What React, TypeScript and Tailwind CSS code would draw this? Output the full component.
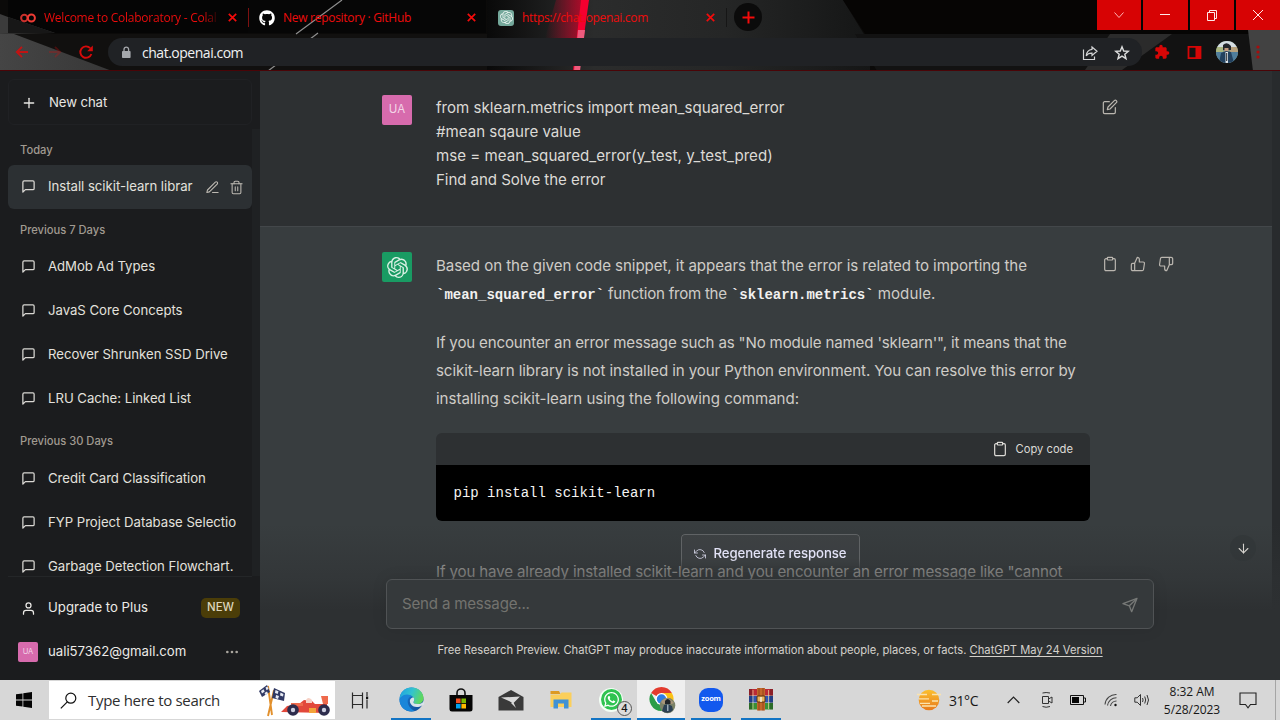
import type { ReactNode } from "react";
import {
  FiArrowDown,
  FiClipboard,
  FiEdit,
  FiEdit3,
  FiMessageSquare,
  FiMoreHorizontal,
  FiPlus,
  FiRefreshCcw,
  FiThumbsDown,
  FiThumbsUp,
  FiTrash2,
  FiUser,
} from "react-icons/fi";
import { FaGithub, FaWhatsapp } from "react-icons/fa";
import { SiOpenai } from "react-icons/si";
import { MdExtension } from "react-icons/md";

/* ---------- Browser chrome ---------- */

function ThemeArt() {
  return (
    <svg className="absolute inset-0" width="1280" height="71" viewBox="0 0 1280 71" aria-hidden="true">
      <defs>
        <linearGradient id="sheen" x1="0" x2="1">
          <stop offset="0" stopColor="#090909" />
          <stop offset="0.28" stopColor="#2b2c2c" />
          <stop offset="0.62" stopColor="#252626" />
          <stop offset="1" stopColor="#151616" />
        </linearGradient>
        <linearGradient id="glow" x1="0" x2="1">
          <stop offset="0" stopColor="#e0002a" stopOpacity="0" />
          <stop offset="1" stopColor="#e0002a" stopOpacity="0.75" />
        </linearGradient>
        <linearGradient id="wing" x1="0" x2="1">
          <stop offset="0" stopColor="#454545" />
          <stop offset="1" stopColor="#373737" />
        </linearGradient>
      </defs>
      <rect width="1280" height="71" fill="#0b0a09" />
      <rect y="34" width="560" height="37" fill="#11100f" />
      <path d="M487 0H843L870 44V71H487Z" fill="url(#sheen)" />
      <path d="M843 0H1280V71H890Z" fill="#060504" />
      <path d="M855 34H1280V71H877Z" fill="#121212" />
      <rect x="8" width="240" height="33" fill="#050505" />
      <rect x="248" width="238" height="33" fill="#060606" />
      <path d="M0 14L8 17L55 33L0 34Z" fill="#3b3b3b" />
      <path d="M8 17L55 33H8Z" fill="#171717" />
      <path d="M0 34L14 34L112 71H0Z" fill="url(#wing)" />
      <path d="M342 0L296 34M318 33L268 71" stroke="#8d8d8d" strokeWidth="1.2" fill="none" />
      <path d="M1110 34H1172L1122 70H1085Z" fill="#2b2b2b" />
      <path d="M1248 30H1280V71H1253Z" fill="#424242" />
      <path d="M556 0H584L578 38H545Z" fill="url(#glow)" />
      <path d="M581 0H589L579 71H573Z" fill="#f5002f" />
      <path d="M578 30H585L580 71H574Z" fill="#ee5b7d" />
      <rect y="70" width="1280" height="1" fill="#4a0407" />
    </svg>
  );
}

function TabClose() {
  return (
    <svg width="9" height="9" viewBox="0 0 9 9" className="shrink-0" stroke="#f40b0b" strokeWidth="1.7">
      <path d="M0.8 0.8L8.2 8.2M8.2 0.8L0.8 8.2" />
    </svg>
  );
}

function Tab({ icon, title, className }: { icon: ReactNode; title: ReactNode; className: string }) {
  return (
    <div className={`flex h-[35px] items-center pr-[11px] ${className}`}>
      <span className="flex w-4 shrink-0 justify-center">{icon}</span>
      <span className="ml-2 flex-1 overflow-hidden text-[12px] whitespace-nowrap text-[#ee0c0c]">{title}</span>
      <TabClose />
    </div>
  );
}

function WindowButton({ children }: { children: ReactNode }) {
  return (
    <div className="flex h-[30px] flex-1 items-center justify-center bg-[#d70304]">
      <svg width="12" height="12" viewBox="0 0 12 12" fill="none" stroke="#ffe9e9" strokeWidth="1">
        {children}
      </svg>
    </div>
  );
}

function Browser() {
  return (
    <header className="relative h-[71px] shrink-0 font-['Open_Sans','Noto_Sans',sans-serif]">
      <ThemeArt />
      <div className="relative flex h-9 items-start pl-2">
        <Tab
          className="w-[240px] pl-[12px]"
          icon={
            <svg width="16" height="10" viewBox="0 0 16 10" fill="none" strokeWidth="2">
              <circle cx="4.3" cy="5" r="3.2" stroke="#c9302c" />
              <circle cx="11.4" cy="5" r="3.5" stroke="#ee3b34" />
            </svg>
          }
          title={
            <span className="block w-[176px] bg-linear-to-r from-[#ee0c0c] from-90% to-transparent bg-clip-text tracking-[-0.24px] text-transparent">
              Welcome to Colaboratory - Colal
            </span>
          }
        />
        <span className="mt-2 h-[19px] w-px bg-[#7d1111]" />
        <Tab
          className="w-[238px] pl-[10px] tracking-[-0.28px]"
          icon={<FaGithub size={16} color="#fff" />}
          title="New repository · GitHub"
        />
        <Tab
          className="w-[239px] pl-[11px] tracking-[-0.34px]"
          icon={
            <span className="flex size-4 items-center justify-center rounded-[3px] bg-[#74a89b]">
              <SiOpenai size={13} color="#e6f2ee" />
            </span>
          }
          title="https://chat.openai.com"
        />
        <span className="mt-2 h-[19px] w-px bg-[#161616]" />
        <span className="mt-[3px] ml-[7px] flex size-7 items-center justify-center rounded-full bg-[#0b0b0b]">
          <svg width="13" height="13" viewBox="0 0 13 13" stroke="#f40b0b" strokeWidth="2">
            <path d="M6.5 0.5V12.5M0.5 6.5H12.5" />
          </svg>
        </span>
        <div className="ml-auto flex w-[183px] gap-[2px]">
          <WindowButton>
            <path d="M1.5 3.5L6 8.5L10.5 3.5" stroke="#ffb3b3" />
          </WindowButton>
          <WindowButton>
            <path d="M1 5.5H11" />
          </WindowButton>
          <WindowButton>
            <path d="M1.5 3.5H8.5V11.5H1.5ZM3.5 3.5V1.5H10.5V9.5H8.5" />
          </WindowButton>
          <WindowButton>
            <path d="M1 1L11 11M11 1L1 11" />
          </WindowButton>
        </div>
      </div>
      <div className="relative flex h-8 items-center pl-[14px]">
        <svg width="80" height="16" viewBox="0 0 80 16" fill="none" stroke="#d60a0a" strokeWidth="1.9">
          <path d="M14 8H3M8 2.8L2.8 8L8 13.2" opacity="0.85" />
          <path d="M35 8H46M41 2.8L46.2 8L41 13.2" opacity="0.28" />
          <path d="M77.4 10A5.7 5.7 0 1 1 76.2 4.2" />
          <path d="M78.8 1.6V7.2H73.2Z" fill="#d60a0a" stroke="none" />
        </svg>
        <div className="ml-[14px] flex h-7 w-[1034px] items-center rounded-full bg-[#202225] pr-[12px] pl-[13px]">
          <svg width="10" height="13" viewBox="0 0 10 13">
            <rect x="1" y="5" width="8.6" height="7" rx="0.8" fill="#a5a8ac" />
            <path d="M3 5V3.4A2.3 2.3 0 0 1 7.6 3.4V5" fill="none" stroke="#a5a8ac" strokeWidth="1.3" />
          </svg>
          <span className="ml-[11px] text-[14px] tracking-[-0.48px] text-[#f1f2f3]">chat.openai.com</span>
          <svg className="mt-px ml-auto" width="16" height="16" viewBox="0 0 16 16" fill="none" stroke="#d4d5d6" strokeWidth="1.2">
            <path d="M1.5 4.5V14.5H12.5V11.5" />
            <path d="M10 2L15 6.2L10 10.4V8.2C7.2 8.1 5.4 9 4.2 10.9C4.5 7.4 6.6 4.7 10 4.3Z" />
          </svg>
          <svg className="mt-px ml-4" width="16" height="16" viewBox="0 0 16 16" fill="none" stroke="#dcdddd" strokeWidth="1.4">
            <path d="M8 1.8L9.7 6L14.3 6.3L10.8 9.2L12 13.7L8 11.2L4 13.7L5.2 9.2L1.7 6.3L6.3 6Z" />
          </svg>
        </div>
        <MdExtension className="ml-[12px]" size={16} color="#d60606" />
        <svg className="ml-[17px]" width="15" height="15" viewBox="0 0 15 15">
          <path d="M1.5 1.8H13.5V13.2H1.5Z" fill="none" stroke="#d60606" strokeWidth="1.8" />
          <rect x="8.5" y="2" width="5" height="11" fill="#d60606" />
        </svg>
        <svg className="ml-[14px]" width="22" height="22" viewBox="0 0 22 22">
          <defs>
            <clipPath id="face">
              <circle cx="11" cy="11" r="11" />
            </clipPath>
          </defs>
          <g clipPath="url(#face)">
            <rect width="22" height="22" fill="#7f9a86" />
            <path d="M0 0H22V6H0Z" fill="#d5dde2" />
            <path d="M0 6H7V11H0Z" fill="#a9b57f" />
            <path d="M14 6H22V12H14Z" fill="#b6a07c" />
            <path d="M0 11H22V22H0Z" fill="#4f7d9c" />
            <path d="M7 4Q11 0 15 5V9H7Z" fill="#23262b" />
            <path d="M8.5 7H12.5V11H8.5Z" fill="#c59a80" />
            <path d="M3 22L5 12L10 10L15 11L18 22Z" fill="#23415f" />
            <path d="M9.5 11H12V22H9.5Z" fill="#dfe7ee" />
            <path d="M10.2 12H11.2V20H10.2Z" fill="#222" />
          </g>
        </svg>
        <svg className="ml-[18px]" width="4" height="14" viewBox="0 0 4 14" fill="#a80d0d">
          <circle cx="2" cy="2" r="1.6" />
          <circle cx="2" cy="7" r="1.6" />
          <circle cx="2" cy="12" r="1.6" />
        </svg>
      </div>
    </header>
  );
}

/* ---------- Sidebar ---------- */

function Heading({ children }: { children: ReactNode }) {
  return (
    <div className="flex h-9 items-center pl-3 text-[11.2px] font-medium tracking-[-0.02px] text-[#a09a91]">{children}</div>
  );
}

function Chat({ title, active }: { title: string; active?: boolean }) {
  return (
    <div className={`flex h-11 shrink-0 items-center rounded-md px-[13px] ${active ? "bg-[#2c3033]" : ""}`}>
      <FiMessageSquare size={15} className="-mt-px shrink-0 text-[#d9d7d3]" />
      <span className="ml-3 overflow-hidden text-[13.2px] tracking-[-0.03px] whitespace-nowrap text-[#e3e1dd]">{title}</span>
      {active && (
        <span className="ml-auto flex gap-[9px] text-[#bdb9b2]">
          <FiEdit3 size={15} strokeWidth={1.7} />
          <FiTrash2 size={15} strokeWidth={1.7} className="-mr-[5px]" />
        </span>
      )}
    </div>
  );
}

function Sidebar() {
  return (
    <aside className="flex w-[260px] shrink-0 flex-col bg-[#1b1c1e]">
      <div className="mx-2 mt-2 flex h-[46px] shrink-0 items-center rounded-md border border-[#202124] px-3 text-[#e8e6e3]">
        <FiPlus size={16} className="mt-px" />
        <span className="mt-[2px] ml-3 text-[13.2px] tracking-[-0.1px]">New chat</span>
      </div>
      <div className="mt-1 flex h-[447px] shrink-0 overflow-hidden">
        <div className="flex h-[447px] w-[252px] shrink-0 flex-col overflow-hidden pl-2">
          <div className="pt-[3px]">
            <Heading>Today</Heading>
          </div>
          <div className="-mt-[3px]">
            <Chat title="Install scikit-learn librar" active />
          </div>
          <div className="mt-[3px]">
            <Heading>Previous 7 Days</Heading>
          </div>
          <div className="-mt-[3px]">
            <Chat title="AdMob Ad Types" />
            <Chat title="JavaS Core Concepts" />
            <Chat title="Recover Shrunken SSD Drive" />
            <Chat title="LRU Cache: Linked List" />
          </div>
          <div className="mt-[2px]">
            <Heading>Previous 30 Days</Heading>
          </div>
          <div className="-mt-[2px]">
            <Chat title="Credit Card Classification" />
            <Chat title="FYP Project Database Selectio" />
            <Chat title="Garbage Detection Flowchart." />
          </div>
        </div>
        <div className="w-2 bg-[#1f2123]" />
      </div>
      <div className="mx-2 h-px shrink-0 bg-[#242628]" />
      <div className="mt-[9px] flex h-11 shrink-0 items-center pr-5 pl-[21px] text-[#eceae7]">
        <FiUser size={15} />
        <span className="ml-3 text-[13.2px]">Upgrade to Plus</span>
        <span className="ml-auto flex h-5 w-[39px] items-center justify-center rounded-[5px] bg-[#4b3d08] text-[11.4px] font-medium text-[#ddd6bd]">
          NEW
        </span>
      </div>
      <div className="flex h-11 shrink-0 items-center pr-5 pl-[18px] text-[#eceae7]">
        <span className="flex size-5 items-center justify-center rounded-[2px] bg-[#d76bad] text-[7.5px] text-[#f3d5e7]">UA</span>
        <span className="ml-[10px] text-[13.2px]">uali57362@gmail.com</span>
        <FiMoreHorizontal size={16} className="ml-auto text-[#aaa69f]" />
      </div>
    </aside>
  );
}

/* ---------- Conversation ---------- */

function Code({ children }: { children: ReactNode }) {
  return (
    <code className="font-['Liberation_Mono',monospace] text-[14px] font-bold tracking-normal text-[#f2f1ef]">{children}</code>
  );
}

function Conversation() {
  return (
    <main className="relative flex flex-1 overflow-hidden bg-[#383d3f]">
      <div className="flex w-[1012px] shrink-0 flex-col text-[15.1px]">
        <section className="flex h-[156px] shrink-0 border-b border-[#43474a] bg-[#2d3032] pt-6 pl-[122px]">
          <span className="flex size-[30px] items-center justify-center rounded-[2px] bg-[#d76bad] text-[11.5px] text-[#f3d5e7]">
            UA
          </span>
          <div className="ml-6 w-[666px] pt-px leading-6 text-[#dcdad6]">
            <p className="tracking-[0.01px]">from sklearn.metrics import mean_squared_error</p>
            <p>#mean sqaure value</p>
            <p className="tracking-[0.02px]">mse = mean_squared_error(y_test, y_test_pred)</p>
            <p className="tracking-[-0.08px]">Find and Solve the error</p>
          </div>
          <FiEdit size={16} className="mt-1 text-[#bab6af]" strokeWidth={1.8} />
        </section>
        <section className="flex flex-1 pt-[25px] pl-[122px] text-[#cfccc7]">
          <span className="flex size-[30px] items-center justify-center rounded-[2px] bg-[#199b63]">
            <SiOpenai size={21} color="#d9f0e4" />
          </span>
          <div className="ml-6 w-[654px] shrink-0 leading-7 whitespace-nowrap">
            <p className="tracking-[-0.07px]">
              Based on the given code snippet, it appears that the error is related to importing the
            </p>
            <p className="tracking-[-0.25px]">
              <Code>`mean_squared_error`</Code> function from the{" "}
              <span className="tracking-[0.8px]"><Code>`sklearn.metrics`</Code></span>{" "}
              <span className="tracking-[0.08px]">module.</span>
            </p>
            <p className="mt-5 tracking-[-0.174px]">
              If you encounter an error message such as "No module named 'sklearn'", it means that the
            </p>
            <p className="tracking-[-0.098px]">
              scikit-learn library is not installed in your Python environment. You can resolve this error by
            </p>
            <p className="tracking-[-0.04px]">installing scikit-learn using the following command:</p>
            <div className="mt-5 overflow-hidden rounded-md">
              <div className="flex h-8 items-center justify-end bg-[#2d3032] pr-[17px] text-[11.2px] text-[#dcdad6]">
                <FiClipboard size={16} strokeWidth={1.8} />
                <span className="ml-2">Copy code</span>
              </div>
              <div className="flex h-14 items-center bg-black pl-[17.5px] font-['Liberation_Mono',monospace] text-[14px] text-[#f5f4f2]">
                pip install scikit-learn
              </div>
            </div>
            <p className="mt-[37px] tracking-[-0.14px]">
              If you have already installed scikit-learn and you encounter an error message like "cannot
            </p>
          </div>
          <div className="mt-1 ml-3 flex gap-3 text-[#bab6af]">
            <FiClipboard size={16} strokeWidth={1.8} />
            <FiThumbsUp size={16} strokeWidth={1.8} />
            <FiThumbsDown size={16} strokeWidth={1.8} />
          </div>
        </section>
      </div>
      <div className="w-2 bg-[#282b2d]" />

      <div className="absolute inset-x-0 bottom-0 flex h-[156px] flex-col bg-linear-to-b from-[#2d3032]/0 from-0% via-[#2f3234]/58 via-35% to-[#2d3032] to-55%">
        <div className="mt-[10px] flex h-[38px] w-[179px] items-center self-center rounded-[4px] border border-[#6a6d6e]/80 bg-[#45484a]/40 pt-px pl-3 text-[13.2px] font-medium tracking-[-0.08px] text-[#e2e2f6] [mask-image:linear-gradient(black_65%,transparent)]">
          <FiRefreshCcw size={12} strokeWidth={1.5} />
          <span className="ml-2">Regenerate response</span>
        </div>
        <div className="mt-[7px] ml-[126px] flex h-[50px] w-[768px] shrink-0 items-center rounded-md border border-[#505355] bg-[#35393b] pt-px pr-[15px] pl-[15px] shadow-[0_0_15px_rgba(0,0,0,0.1)]">
          <span className="text-[15.1px] tracking-[-0.2px] text-[#73736f]">Send a message...</span>
          <svg className="ml-auto" width="16" height="16" viewBox="0 0 24 24" fill="none" stroke="#777977" strokeWidth="2" strokeLinejoin="round">
            <path d="M22.5 2L1.5 10L11 13.2L14.5 22Z" />
            <path d="M22 2.5L11 13.2" />
          </svg>
        </div>
        <p className="mt-[13px] ml-[177.5px] text-[11.2px] leading-4 tracking-[-0.028px] whitespace-nowrap text-[#d4d1cb]">
          Free Research Preview. ChatGPT may produce inaccurate information about people, places, or facts.{" "}
          <span className="tracking-normal underline underline-offset-2">ChatGPT May 24 Version</span>
        </p>
      </div>
      <span className="absolute right-6 bottom-[119px] flex size-[26px] items-center justify-center rounded-full bg-[#313537]/60">
        <FiArrowDown size={15} className="text-[#d6d3ce]" strokeWidth={1.7} />
      </span>
    </main>
  );
}

/* ---------- Taskbar ---------- */

function TaskbarApp({ children, open, current }: { children: ReactNode; open?: boolean; current?: boolean }) {
  return (
    <div className={`flex h-10 w-12 flex-col items-center ${current ? "bg-[#efefef]" : ""}`}>
      <span className="flex flex-1 items-center justify-center pt-px">{children}</span>
      <span className={`h-[2px] ${current ? "w-12" : "w-10"} ${open ? "bg-[#1274c4]" : ""}`} />
    </div>
  );
}

function RaceCar() {
  return (
    <svg width="74" height="36" viewBox="0 0 74 36">
      <path d="M15 33L11 4M11 34L17 8" stroke="#e2902c" strokeWidth="1.9" />
      <path d="M2 9L10 3L13 10L5 15Z" fill="#303964" />
      <path d="M17 6L28 11L27 19L15 16Z" fill="#303964" />
      <path
        d="M4 9L6.500 7.300L7.700 9.500L5 11.500ZM8.500 5.500L10.500 4.500L11.500 7L9.500 8.300ZM7.500 11L10 9.500L11 11.500L8.500 13ZM18.500 8L21.500 9.300L20.700 12L18 11ZM23.500 10.500L26.500 12L26 14.500L23 13.500ZM19 13L22 14L21 17L18.500 16Z"
        fill="#e9ecf5"
      />
      <path d="M24 30L30 24L42 22L47 18L55 19L58 22H70V31Z" fill="#e2483a" />
      <path d="M64 14H71V22H66ZM34 21H46V24H34Z" fill="#ef6a4c" />
      <path d="M52 26H59V31H52Z" fill="#f3a33a" />
      <path d="M49 18Q51 14 55 18V21H49Z" fill="#f7d0c4" />
      <circle cx="36" cy="28" r="5.8" fill="#2d2c4c" />
      <circle cx="36" cy="28" r="2.2" fill="#cdcfe0" />
      <circle cx="67" cy="28" r="5.8" fill="#2d2c4c" />
      <circle cx="67" cy="28" r="2.2" fill="#cdcfe0" />
    </svg>
  );
}

function EdgeIcon() {
  return (
    <svg width="25" height="25" viewBox="0 0 25 25">
      <defs>
        <linearGradient id="edgeTop" x1="0" x2="1" y1="0.2" y2="0.5">
          <stop offset="0" stopColor="#1fa4e2" />
          <stop offset="0.5" stopColor="#33c3ce" />
          <stop offset="1" stopColor="#62d958" />
        </linearGradient>
        <linearGradient id="edgeLow" x1="0" x2="1" y2="1">
          <stop offset="0" stopColor="#1c7fd4" />
          <stop offset="1" stopColor="#114a95" />
        </linearGradient>
      </defs>
      <circle cx="12.5" cy="12.5" r="12" fill="url(#edgeLow)" />
      <path
        d="M0.6 12C1 5 6 0.5 12.5 0.5C19.5 0.5 24.5 5.5 24.5 11C24.5 15 21.5 17 18.5 17C15.5 17 14 16 14.5 15C15.5 13.5 15.5 12 14.5 10.5C12.5 7.5 4 6 0.6 12Z"
        fill="url(#edgeTop)"
      />
      <path d="M0.6 12C4 6 11 7 13.5 9.5C9.5 9.5 8 13 9 16.5C10 20.500 13.500 23 16 24C7 26 0 20 0.6 12Z" fill="#1a86d9" />
      <path
        d="M14.6 10.6C12 10.5 9.8 13 11.5 16.5C13.5 20.5 19 21 23 18.5C24 18 24.2 18.5 25 17.5V14C23 16.500 21 17 18.5 17C15.5 17 14 16 14.5 15C15.5 13.5 15.4 12 14.6 10.6Z"
        fill="#d9e3ea"
      />
    </svg>
  );
}

function StoreIcon() {
  return (
    <svg width="24" height="24" viewBox="0 0 24 24">
      <path d="M8 8V5A4 4 0 0 1 16 5V8" fill="none" stroke="#111" strokeWidth="1.6" />
      <path d="M0.5 7H23.5V21Q23.5 23.5 21 23.5H3Q0.5 23.5 0.5 21Z" fill="#050505" />
      <rect x="7" y="10.5" width="4.6" height="4.6" fill="#f25022" />
      <rect x="12.4" y="10.5" width="4.6" height="4.6" fill="#7fba00" />
      <rect x="7" y="15.9" width="4.6" height="4.6" fill="#00a4ef" />
      <rect x="12.4" y="15.9" width="4.6" height="4.6" fill="#ffb900" />
    </svg>
  );
}

function MailIcon() {
  return (
    <svg width="26" height="22" viewBox="0 0 26 22">
      <path d="M0.5 8L13 1L25.5 8V21.5H0.5Z" fill="#3a3a3a" />
      <path d="M3 8.5L22 7.5L15 14.5L11.5 12.2Z" fill="#dadada" />
      <path d="M15.5 13.5L18 19L13 14Z" fill="#dadada" />
    </svg>
  );
}

function FolderIcon() {
  return (
    <svg width="22" height="19" viewBox="0 0 22 19">
      <path d="M0.5 1H9L10.5 4H0.5Z" fill="#dd9a22" />
      <path d="M0.5 4.5H10L11.5 2.5H21.5V17H0.5Z" fill="#fbcf5b" />
      <path d="M3.5 18.5V9.5H18.5V18.5H14V13.5H8V18.5Z" fill="#4192d5" />
    </svg>
  );
}

function ChromeIcon() {
  return (
    <svg width="25" height="28" viewBox="0 0 25 28" overflow="visible">
      <path d="M12.5 13L2.1 7A12 12 0 0 1 22.9 7H12.5Z" fill="#e33b2e" />
      <path d="M12.5 7H22.9A12 12 0 0 1 12.5 25L17.7 16Z" fill="#fbc116" />
      <path d="M7.3 16L2.1 7A12 12 0 0 0 12.5 25L17.7 16Z" fill="#2b9d48" />
      <circle cx="12.5" cy="13" r="6" fill="#fff" />
      <circle cx="12.5" cy="13" r="4.7" fill="#2f7de6" />
      <circle cx="18.5" cy="19.5" r="7.8" fill="#7b8268" />
      <path d="M12 16Q18 8 25 17L23 18H14Z" fill="#a7957a" />
      <path d="M16 15Q18.5 11 21.5 15V18H16Z" fill="#22262a" />
      <path d="M13 25L15 19L19 18L23 20L24 24A7.8 7.8 0 0 1 13 25Z" fill="#2b4054" />
      <path d="M18.2 18.5H19.4V25H18.2Z" fill="#b5c3cc" />
    </svg>
  );
}

function WinRarIcon() {
  return (
    <svg width="24" height="23" viewBox="0 0 24 23">
      <rect y="1" width="24" height="6.5" fill="#bb2a35" />
      <rect y="8" width="24" height="6.5" fill="#2f55b0" />
      <rect y="15" width="24" height="6.5" fill="#3a8f36" />
      <path d="M0 1H3V21.5H0ZM21 1H24V21.5H21Z" fill="#000" opacity="0.25" />
      <path d="M4 2V21M19.5 2V21" stroke="#e6d9a5" strokeWidth="0.7" />
      <rect x="8" width="8" height="22.5" fill="#c2672a" />
      <path d="M10 0V22.5M14 0V22.5" stroke="#8b3d16" strokeWidth="0.8" />
      <rect x="8" y="8" width="8" height="6" rx="1" fill="#e9b55e" stroke="#5a3410" />
      <path d="M12 9V14" stroke="#f4f0e0" strokeWidth="1.5" />
    </svg>
  );
}

function Taskbar() {
  return (
    <footer className="flex h-10 shrink-0 items-center bg-[#d7d7d7] font-['Open_Sans','Noto_Sans',sans-serif] text-[#161616]">
      <div className="flex w-[49px] items-center justify-center pr-px">
        <svg width="16" height="16" viewBox="0 0 16 16" fill="#050505">
          <path d="M0 2.3L6.5 1.4V7.6H0ZM7.3 1.3L16 0V7.6H7.3ZM0 8.4H6.5V14.6L0 13.7ZM7.3 8.4H16V16L7.3 14.7Z" />
        </svg>
      </div>
      <div className="flex h-[38px] w-[286px] items-center bg-white pl-[11px]">
        <svg width="17" height="17" viewBox="0 0 17 17" fill="none" stroke="#111" strokeWidth="1.2">
          <circle cx="10.8" cy="6.2" r="5" />
          <path d="M7.3 9.8L0.8 16.3" />
        </svg>
        <span className="mt-px ml-[11px] text-[15px] tracking-[-0.32px] text-[#2e2e2e]">Type here to search</span>
        <span className="mr-[4px] ml-auto">
          <RaceCar />
        </span>
      </div>
      <div className="flex w-[52px] items-center justify-center pr-[2px]">
        <svg width="18" height="17" viewBox="0 0 18 17" fill="none" stroke="#2a2a2a" strokeWidth="1.2">
          <path d="M1.5 0.5V3.5H11.5V0.5M1.5 3.5V12.5H11.5V3.5M1.5 16.5V12.5M11.5 12.5V16.5" />
          <path d="M16 0V4M16 7.5V16.5" />
          <path d="M15 4.5H17.2V7H15Z" fill="#111" stroke="none" />
        </svg>
      </div>
      <div className="flex gap-[2px]">
        <TaskbarApp open>
          <EdgeIcon />
        </TaskbarApp>
        <TaskbarApp>
          <StoreIcon />
        </TaskbarApp>
        <TaskbarApp>
          <MailIcon />
        </TaskbarApp>
        <TaskbarApp>
          <FolderIcon />
        </TaskbarApp>
        <TaskbarApp open>
          <span className="relative flex size-6 items-center justify-center rounded-full bg-[#f4fff6]">
            <span className="flex size-[21px] items-center justify-center rounded-full bg-[#2fc351]">
              <FaWhatsapp size={17} color="#fff" />
            </span>
            <span className="absolute -right-[9px] -bottom-[4px] flex size-[15px] items-center justify-center rounded-full border border-[#555] bg-[#dcdcdc] text-[11px] font-semibold">
              4
            </span>
          </span>
        </TaskbarApp>
        <TaskbarApp open current>
          <ChromeIcon />
        </TaskbarApp>
        <TaskbarApp open>
          <span className="flex size-6 items-center justify-center rounded-[9px] bg-[#1259ee] pb-[2px] text-[7.5px] leading-none font-bold tracking-[-0.2px] text-white">
            zoom
          </span>
        </TaskbarApp>
        <TaskbarApp open>
          <WinRarIcon />
        </TaskbarApp>
      </div>
      <div className="ml-auto flex items-center">
        <svg width="24" height="22" viewBox="0 0 24 22">
          <defs>
            <linearGradient id="sun" y2="1" x2="0">
              <stop offset="0" stopColor="#fbc02f" />
              <stop offset="1" stopColor="#e77a1c" />
            </linearGradient>
          </defs>
          <circle cx="12" cy="11" r="10.3" fill="url(#sun)" />
          <path d="M0 5.5H10M15 5.5H24M2 9.8H12M3 14.3H13M15 12H21M5 17H19" stroke="#fbe3ad" strokeWidth="1.3" />
        </svg>
        <span className="ml-[8px] w-[30px] text-[14px] tracking-[-0.45px]">31°C</span>
        <svg className="ml-[28px]" width="13" height="8" viewBox="0 0 13 8" fill="none" stroke="#222" strokeWidth="1.2">
          <path d="M0.7 7L6.5 1.2L12.3 7" />
        </svg>
        <svg className="ml-[21px]" width="12" height="16" viewBox="0 0 12 16" fill="none" stroke="#333" strokeWidth="1">
          <path d="M1.5 1Q5 0 9 1M1.5 14.5Q5 16 9 14.5M1.5 4.5H7.5V11.5H1.5ZM7.5 7L11 5V11L7.5 9" />
        </svg>
        <svg className="ml-[17px]" width="16" height="10" viewBox="0 0 16 10">
          <path d="M0.5 0.5H13.5V9.5H0.5ZM13.5 3H15.5V7H13.5" fill="none" stroke="#111" />
          <rect x="2" y="2" width="7" height="6" fill="#050505" />
        </svg>
        <svg className="ml-[18px]" width="14" height="14" viewBox="0 0 14 14" fill="none" stroke="#444" strokeWidth="1.1">
          <path d="M1 11.5A11 11 0 0 1 12.5 1.5M3.5 12.5A9 9 0 0 1 12.5 4.7M6.5 13A6 6 0 0 1 12.5 8" />
          <circle cx="11.5" cy="12" r="1.2" fill="#111" stroke="none" />
        </svg>
        <svg className="ml-[16px]" width="16" height="14" viewBox="0 0 16 14" fill="none" stroke="#333" strokeWidth="1">
          <path d="M0.8 4.8H3.2L6.5 1.5V12.5L3.2 9.2H0.8ZM8.5 5Q9.7 7 8.5 9M10.7 3.5Q12.7 7 10.7 10.5M13 2Q16 7 13 12" />
        </svg>
        <div className="mt-px ml-[12px] w-[60px] text-center text-[12px] leading-[18px] tracking-[-0.06px]">
          <div>8:32 AM</div>
          <div>5/28/2023</div>
        </div>
        <svg className="ml-[17px]" width="18" height="17" viewBox="0 0 18 17" fill="none" stroke="#222" strokeWidth="1.1">
          <path d="M1 1H17V12.5H11.5L9 15.8L6.5 12.5H1Z" />
        </svg>
        <span className="mr-1 ml-[18px] h-10 w-px bg-[#a5a5a5]" />
      </div>
    </footer>
  );
}

export default function App() {
  return (
    <div className="flex h-[720px] w-[1280px] flex-col overflow-hidden bg-black font-['Inter','Liberation_Sans',sans-serif]">
      <Browser />
      <div className="flex min-h-0 flex-1">
        <Sidebar />
        <Conversation />
      </div>
      <Taskbar />
    </div>
  );
}
